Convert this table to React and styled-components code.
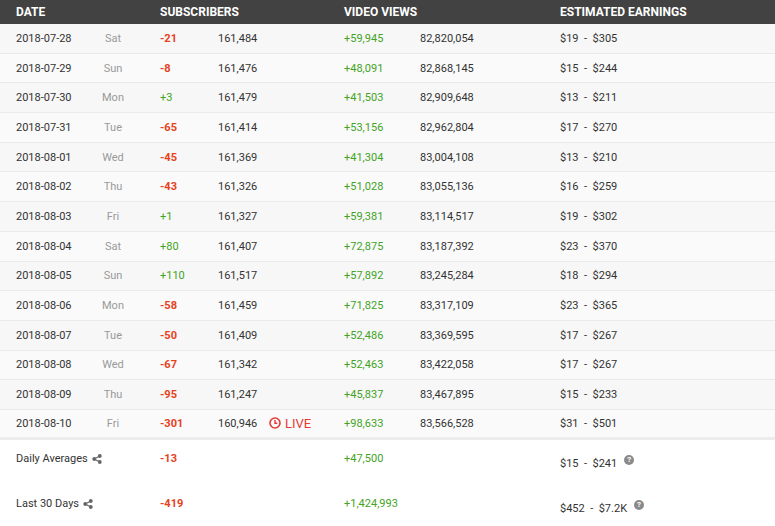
import React from 'react'
import styled, { createGlobalStyle } from 'styled-components'

const GlobalStyle = createGlobalStyle`
  html, body {
    margin: 0;
    padding: 0;
    background: #fff;
  }
  body {
    font-family: Roboto, "Liberation Sans", Arial, sans-serif;
    color: #333;
  }
`

const COLS = '72px 50px 80px 51px 75px 76px 140px 1fr'

const Table = styled.div`
  width: 775px;
  font-size: 11px;
`

const Header = styled.div`
  display: grid;
  grid-template-columns: 144px 184px 216px 1fr;
  align-items: center;
  height: 24px;
  padding-left: 16px;
  background: #424242;
  color: #fff;
  font-size: 12px;
  font-weight: 700;
  text-transform: uppercase;
`

const Row = styled.div`
  display: grid;
  grid-template-columns: ${COLS};
  align-items: center;
  box-sizing: border-box;
  height: 29.7px;
  padding-left: 16px;
  background: ${p => (p.$odd ? '#f7f7f7' : '#fafafa')};
  border-bottom: ${p => (p.$last ? '3px solid #ececec' : '1px solid #eaeaea')};
`

const DateCell = styled.div`
  color: #333;
`

const Day = styled.div`
  text-align: center;
  color: #999;
`

const Change = styled.div`
  padding-left: ${p => p.$pad || 0}px;
  color: ${p => (p.$neg ? '#e8401c' : '#43a324')};
  font-weight: ${p => (p.$neg && p.$bold ? 700 : 400)};
`

const Total = styled.div`
  color: #333;
`

const Live = styled.div`
  display: flex;
  align-items: center;
  gap: 4px;
  color: #e53935;
  font-size: 13px;
`

const Earnings = styled.div`
  color: #333;
`

const Footer = styled.div`
  display: grid;
  grid-template-columns: ${COLS};
  box-sizing: border-box;
  height: ${p => p.$h}px;
  padding: ${p => p.$top}px 0 0 16px;
`

const Label = styled.div`
  grid-column: span 2;
  display: flex;
  align-items: center;
  gap: 4px;
  color: #333;
  height: 14px;
`

const Sum = styled.div`
  height: 14px;
  display: flex;
  align-items: center;
`

const FootEarn = styled.div`
  display: flex;
  align-items: flex-start;
  gap: 7px;
  padding-top: 5px;
  color: #333;
`

const Help = styled.span`
  display: inline-flex;
  align-items: center;
  justify-content: center;
  width: 10px;
  height: 10px;
  margin-top: -2px;
  border-radius: 50%;
  background: #8a8a8a;
  color: #fff;
  font-size: 8px;
  font-weight: 700;
`

const ShareIcon = () => (
  <svg width="10" height="10" viewBox="0 0 10 10">
    <g fill="#666">
      <circle cx="7.8" cy="2" r="1.9" />
      <circle cx="2.2" cy="5" r="1.9" />
      <circle cx="7.8" cy="8" r="1.9" />
    </g>
    <path d="M7.8 2 L2.2 5 L7.8 8" stroke="#666" strokeWidth="1.2" fill="none" />
  </svg>
)

const ClockIcon = () => (
  <svg width="12" height="12" viewBox="0 0 12 12">
    <circle cx="6" cy="6" r="5" stroke="#e53935" strokeWidth="1.6" fill="none" />
    <path d="M6 3 V6.3 H8.3" stroke="#e53935" strokeWidth="1.4" fill="none" />
  </svg>
)

const rows = [
  ['2018-07-28', 'Sat', '-21', '161,484', '+59,945', '82,820,054', '$19', '$305'],
  ['2018-07-29', 'Sun', '-8', '161,476', '+48,091', '82,868,145', '$15', '$244'],
  ['2018-07-30', 'Mon', '+3', '161,479', '+41,503', '82,909,648', '$13', '$211'],
  ['2018-07-31', 'Tue', '-65', '161,414', '+53,156', '82,962,804', '$17', '$270'],
  ['2018-08-01', 'Wed', '-45', '161,369', '+41,304', '83,004,108', '$13', '$210'],
  ['2018-08-02', 'Thu', '-43', '161,326', '+51,028', '83,055,136', '$16', '$259'],
  ['2018-08-03', 'Fri', '+1', '161,327', '+59,381', '83,114,517', '$19', '$302'],
  ['2018-08-04', 'Sat', '+80', '161,407', '+72,875', '83,187,392', '$23', '$370'],
  ['2018-08-05', 'Sun', '+110', '161,517', '+57,892', '83,245,284', '$18', '$294'],
  ['2018-08-06', 'Mon', '-58', '161,459', '+71,825', '83,317,109', '$23', '$365'],
  ['2018-08-07', 'Tue', '-50', '161,409', '+52,486', '83,369,595', '$17', '$267'],
  ['2018-08-08', 'Wed', '-67', '161,342', '+52,463', '83,422,058', '$17', '$267'],
  ['2018-08-09', 'Thu', '-95', '161,247', '+45,837', '83,467,895', '$15', '$233'],
  ['2018-08-10', 'Fri', '-301', '160,946', '+98,633', '83,566,528', '$31', '$501'],
]

const App = () => {
  return (
    <>
      <GlobalStyle />
      <Table>
        <Header>
          <div>Date</div>
          <div>Subscribers</div>
          <div>Video Views</div>
          <div>Estimated Earnings</div>
        </Header>
        {rows.map((r, i) => (
          <Row key={r[0]} $odd={i % 2 === 0} $last={i === rows.length - 1}>
            <DateCell>{r[0]}</DateCell>
            <Day>{r[1]}</Day>
            <Change $pad={22} $neg={r[2].startsWith('-')} $bold>{r[2]}</Change>
            <Total>{r[3]}</Total>
            <div>
              {i === rows.length - 1 && (
                <Live>
                  <ClockIcon />
                  LIVE
                </Live>
              )}
            </div>
            <Change>{r[4]}</Change>
            <Total>{r[5]}</Total>
            <Earnings>{r[6]}&nbsp; - &nbsp;{r[7]}</Earnings>
          </Row>
        ))}
        <Footer $h={45} $top={12}>
          <Label>Daily Averages <ShareIcon /></Label>
          <Sum><Change $pad={22} $neg $bold>-13</Change></Sum>
          <div />
          <div />
          <Sum><Change>+47,500</Change></Sum>
          <div />
          <FootEarn>$15&nbsp; - &nbsp;$241 <Help>?</Help></FootEarn>
        </Footer>
        <Footer $h={40} $top={12}>
          <Label>Last 30 Days <ShareIcon /></Label>
          <Sum><Change $pad={22} $neg $bold>-419</Change></Sum>
          <div />
          <div />
          <Sum><Change>+1,424,993</Change></Sum>
          <div />
          <FootEarn>$452&nbsp; - &nbsp;$7.2K <Help>?</Help></FootEarn>
        </Footer>
      </Table>
    </>
  )
}

export default App
